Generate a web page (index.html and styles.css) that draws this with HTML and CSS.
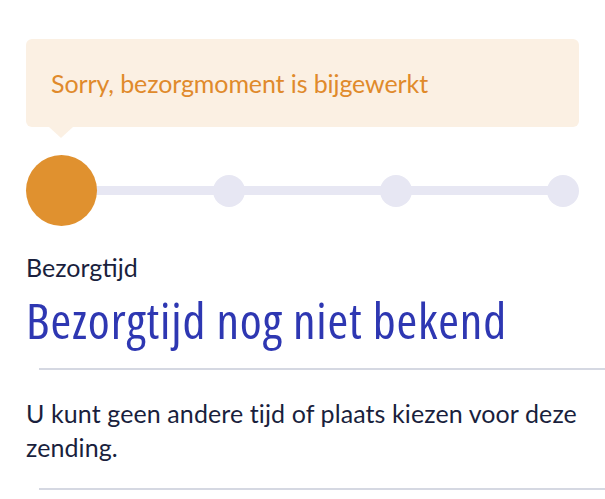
FILE: index.html
```html
<!DOCTYPE html>
<html lang="nl">
<head>
    <meta charset="UTF-8">
    <meta name="viewport" content="width=device-width, initial-scale=1.0">
    <title>Bezorgtijd</title>
    <link rel="stylesheet" href="styles.css">
</head>
<body>

<main class="page">
    <div class="notice">Sorry, bezorgmoment is bijgewerkt</div>

    <div class="progress">
        <div class="steps">
            <div class="step"><span class="dot current"></span></div>
            <div class="step"><span class="dot"></span></div>
            <div class="step"><span class="dot"></span></div>
            <div class="step"><span class="dot"></span></div>
        </div>
    </div>

    <section class="delivery">
        <div class="label">Bezorgtijd</div>
        <h1 class="title">Bezorgtijd nog niet bekend</h1>
    </section>

    <hr class="divider">

    <p class="info">U kunt geen andere tijd of plaats kiezen voor deze zending.</p>

    <hr class="divider">
</main>

</body>
</html>
```

FILE: styles.css
```css
body {
    margin: 0;
    font-family: Lato, "Open Sans", sans-serif;
    color: #1a1f3d;
    background: #fff;
}
.page {
    padding: 39px 26px 0;
}

/* melding boven de stappen */
.notice {
    position: relative;
    height: 88px;
    line-height: 88px;
    padding-left: 25px;
    background: #fbf0e3;
    border-radius: 6px;
    color: #e08a2b;
    font-size: 25px;
    letter-spacing: -0.1px;
}
.notice::after {
    content: "";
    position: absolute;
    top: 100%;
    left: 23px;
    border-left: 12px solid transparent;
    border-right: 12px solid transparent;
    border-top: 11px solid #fbf0e3;
}

/* voortgang */
.progress {
    position: relative;
    margin-top: 28px;
    height: 71px;
}
.progress::before {
    content: "";
    position: absolute;
    left: 30px;
    right: 10px;
    top: 31px;
    height: 9px;
    background: #e7e7f3;
}
.steps {
    position: relative;
    display: flex;
    justify-content: space-between;
    align-items: center;
    height: 100%;
    margin: 0 16px 0 35.5px;
}
.step {
    width: 0;
    display: flex;
    justify-content: center;
}
.dot {
    flex: none;
    width: 32px;
    height: 32px;
    border-radius: 50%;
    background: #e7e7f3;
}
.dot.current {
    width: 71px;
    height: 71px;
    background: #e0912f;
}

/* bezorgtijd */
.delivery {
    margin-top: 26px;
}
.label {
    font-size: 25px;
    line-height: 30px;
}
.title {
    margin: 8px 0 0;
    font-family: "Open Sans", sans-serif;
    font-stretch: 75%;
    font-weight: normal;
    font-size: 50px;
    line-height: 60px;
    letter-spacing: 0.85px;
    color: #2e37b2;
}

.divider {
    border: none;
    height: 2px;
    background: #d5d8e2;
    margin: 18px -26px 0 13px;
}
.info {
    margin: 26px 0 24px;
    font-size: 25px;
    line-height: 34px;
    letter-spacing: 0.1px;
}
```
